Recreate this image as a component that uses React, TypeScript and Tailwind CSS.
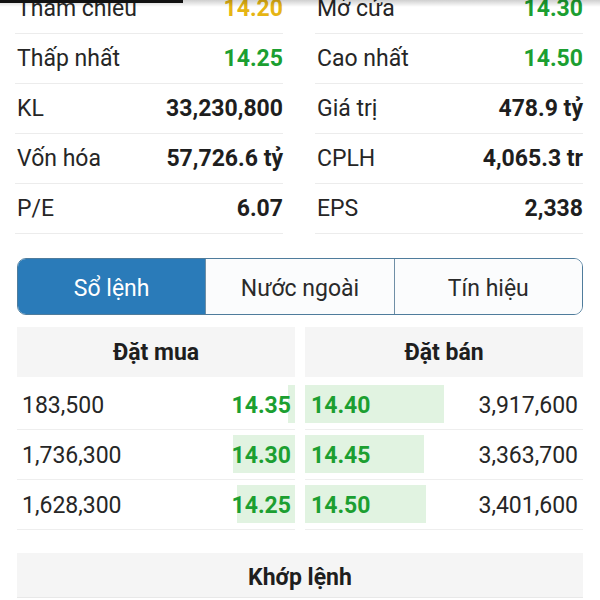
import React, { FC } from 'react';

type Stat = { label: string; value: string; tone?: 'ref' | 'up' };

const leftStats: Stat[] = [
  { label: 'Tham chiếu', value: '14.20', tone: 'ref' },
  { label: 'Thấp nhất', value: '14.25', tone: 'up' },
  { label: 'KL', value: '33,230,800' },
  { label: 'Vốn hóa', value: '57,726.6 tỷ' },
  { label: 'P/E', value: '6.07' },
];

const rightStats: Stat[] = [
  { label: 'Mở cửa', value: '14.30', tone: 'up' },
  { label: 'Cao nhất', value: '14.50', tone: 'up' },
  { label: 'Giá trị', value: '478.9 tỷ' },
  { label: 'CPLH', value: '4,065.3 tr' },
  { label: 'EPS', value: '2,338' },
];

const buys = [
  { vol: '183,500', price: '14.35', bar: 7 },
  { vol: '1,736,300', price: '14.30', bar: 62 },
  { vol: '1,628,300', price: '14.25', bar: 58 },
];

const sells = [
  { vol: '3,917,600', price: '14.40', bar: 139 },
  { vol: '3,363,700', price: '14.45', bar: 119 },
  { vol: '3,401,600', price: '14.50', bar: 121 },
];

const toneClass = (tone?: Stat['tone']) => {
  if (tone === 'ref') return 'text-[#e6b514]';
  if (tone === 'up') return 'text-[#1c9f31]';
  return 'text-[#1e1e1e]';
};

const StatColumn: FC<{ items: Stat[] }> = ({ items }) => (
  <div className="flex flex-col">
    {items.map((s) => (
      <div
        key={s.label}
        className="flex h-[50px] items-center justify-between border-b border-[#ececec] pl-[2px] pt-[2px]"
      >
        <span className="text-[23px] text-[#262626]">{s.label}</span>
        <span className={`text-[23px] font-bold ${toneClass(s.tone)}`}>{s.value}</span>
      </div>
    ))}
  </div>
);

const tabs = ['Sổ lệnh', 'Nước ngoài', 'Tín hiệu'];

const App: FC = () => {
  return (
    <div
      className="relative h-[600px] w-[600px] overflow-hidden bg-white"
      style={{ fontFamily: 'Roboto, "Noto Sans", sans-serif' }}
    >
      {/* stats, first row scrolled partly out of view */}
      <div className="-mt-[16px] grid grid-cols-2 gap-x-[32px] pl-[15px] pr-[17px]">
        <StatColumn items={leftStats} />
        <StatColumn items={rightStats} />
      </div>

      {/* tabs */}
      <div className="mx-[17px] mt-[24px] flex h-[57px] overflow-hidden rounded-[9px] border-[1.5px] border-[#4f7c9c]">
        {tabs.map((t, i) => (
          <div
            key={t}
            className={
              i === 0
                ? 'flex flex-1 items-center justify-center bg-[#2a7bb9] pt-[5px] text-[23px] text-white'
                : 'flex flex-1 items-center justify-center border-l-[1.5px] border-[#6f8fa6] bg-[#fbfcfd] pt-[5px] text-[23px] text-[#2a2a2a]'
            }
          >
            {t}
          </div>
        ))}
      </div>

      {/* order book */}
      <div className="mx-[17px] mt-[12px] grid grid-cols-2 gap-x-[10px]">
        <div className="flex flex-col">
          <div className="flex h-[50px] items-center justify-center bg-[#f5f5f5] pt-[2px] text-[23px] font-bold text-[#1e1e1e]">
            Đặt mua
          </div>
          <div className="mt-[3px]">
            {buys.map((b) => (
              <div
                key={b.price}
                className="relative flex h-[50px] items-center justify-between border-b border-[#eeeeee] pl-[5px] pr-[4px] pt-[3px]"
              >
                <div
                  className="absolute right-0 top-[5px] h-[38px] bg-[#e1f3e1]"
                  style={{ width: b.bar }}
                />
                <span className="relative text-[23px] text-[#262626]">{b.vol}</span>
                <span className="relative text-[23px] font-bold text-[#1c9f31]">{b.price}</span>
              </div>
            ))}
          </div>
        </div>
        <div className="flex flex-col">
          <div className="flex h-[50px] items-center justify-center bg-[#f5f5f5] pt-[2px] text-[23px] font-bold text-[#1e1e1e]">
            Đặt bán
          </div>
          <div className="mt-[3px]">
            {sells.map((s) => (
              <div
                key={s.price}
                className="relative flex h-[50px] items-center justify-between border-b border-[#eeeeee] pl-[6px] pr-[5px] pt-[3px]"
              >
                <div
                  className="absolute left-0 top-[5px] h-[38px] bg-[#e1f3e1]"
                  style={{ width: s.bar }}
                />
                <span className="relative text-[23px] font-bold text-[#1c9f31]">{s.price}</span>
                <span className="relative text-[23px] text-[#262626]">{s.vol}</span>
              </div>
            ))}
          </div>
        </div>
      </div>

      {/* matched orders */}
      <div className="mx-[17px] mt-[23px] flex h-[45px] items-center justify-center border-b border-[#e8e8e8] bg-[#f5f5f5] pt-[6px] text-[23px] font-bold text-[#1e1e1e]">
        Khớp lệnh
      </div>

      {/* header shadow and overlay strip at the top edge */}
      <div className="pointer-events-none absolute inset-x-0 top-0 h-[7px] bg-gradient-to-b from-[#00000030] to-transparent" />
      <div className="absolute left-0 top-0 h-[3px] w-[183px] bg-[#111]" />
    </div>
  );
};

export default App;
